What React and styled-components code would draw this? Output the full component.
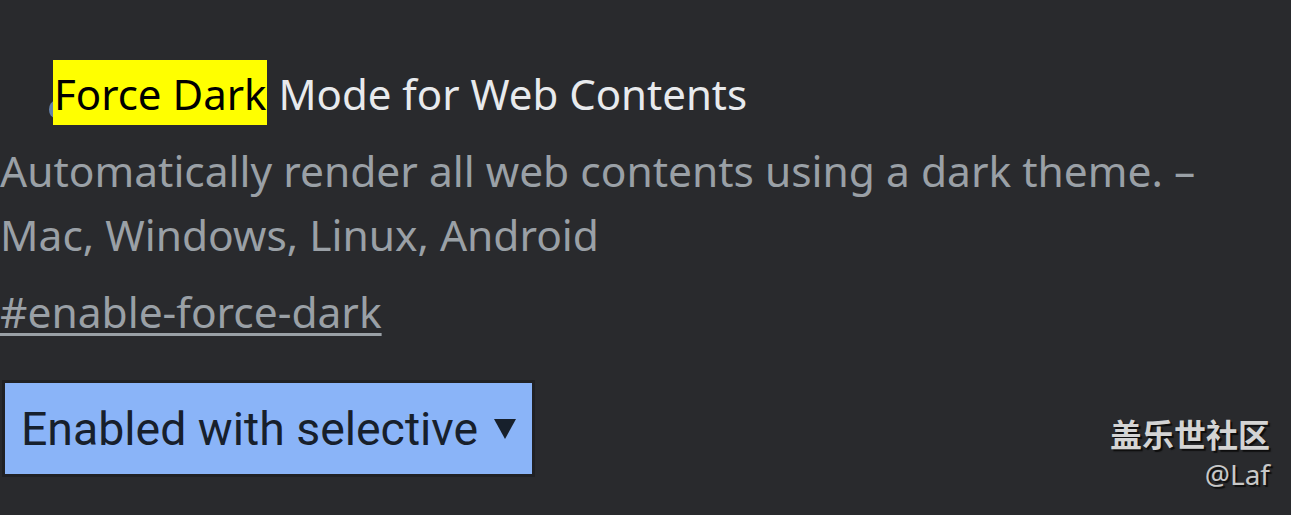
import React from 'react';
import styled, { createGlobalStyle } from 'styled-components';

const GlobalStyle = createGlobalStyle`
	html, body {
		margin: 0;
		padding: 0;
		background: #292a2d;
		height: 100%;
	}
	#root {
		height: 100%;
	}
`;

const Page = styled.div`
	position: relative;
	width: 1291px;
	height: 515px;
	overflow: hidden;
	background: #292a2d;
	font-family: 'Noto Sans', 'Open Sans', sans-serif;
`;

const Experiment = styled.div`
	display: flex;
	flex-direction: column;
	align-items: flex-start;
	padding-top: 61px;
`;

const Title = styled.h3`
	position: relative;
	margin: 0 0 0 53px;
	font-size: 42px;
	font-weight: 400;
	line-height: 65px;
	color: #e8eaed;
`;

const Highlight = styled.mark`
	position: relative;
	padding: 5px 1px 3px;
	background: #ffff00;
	color: #000;
`;

const Dot = styled.span`
	position: absolute;
	left: -4px;
	top: 40px;
	width: 12px;
	height: 17px;
	border-radius: 50%;
	background: #7ea6e0;
	opacity: 0.7;
	clip-path: inset(0 55% 0 0);
`;

const Description = styled.p`
	margin: 13px 0 0;
	font-size: 42.5px;
	line-height: 64px;
	color: #9aa0a6;
`;

const Permalink = styled.a`
	display: block;
	margin-top: 17px;
	font-size: 42.5px;
	line-height: 56px;
	color: #9aa0a6;
	text-decoration: underline;
	text-underline-offset: 5px;
	text-decoration-thickness: 3px;
`;

const Select = styled.div`
	display: flex;
	align-items: center;
	gap: 16px;
	margin: 43px 0 0 5px;
	width: 527px;
	height: 91px;
	padding: 0 17px 0 16px;
	box-sizing: border-box;
	background: #8ab4f8;
	box-shadow: 0 0 0 3px #202124;
	font-family: Roboto, 'Liberation Sans', sans-serif;
	font-size: 46.4px;
	color: #17202c;
	white-space: nowrap;
`;

const Arrow = styled.span`
	margin-left: auto;
	flex-shrink: 0;
	width: 0;
	height: 0;
	border-left: 11px solid transparent;
	border-right: 11px solid transparent;
	border-top: 20px solid #17202c;
`;

const Watermark = styled.div`
	position: absolute;
	top: 414px;
	right: 21px;
	display: flex;
	flex-direction: column;
	align-items: flex-end;
	gap: 4px;
	color: #d4d4d4;
	text-shadow: 2px 2px 1px #0e0e0e;
`;

const Brand = styled.div`
	font-family: 'Noto Sans CJK SC', sans-serif;
	font-weight: 700;
	font-size: 32px;
	line-height: 38px;
`;

const Handle = styled.div`
	font-family: 'Noto Sans', sans-serif;
	font-size: 28px;
	line-height: 36px;
	color: #c8c8c8;
`;

export default function App() {
	return (
		<Page>
			<GlobalStyle />
			<Experiment>
				<Title>
					<Dot />
					<Highlight>Force Dark</Highlight> Mode for Web Contents
				</Title>
				<Description>
					Automatically render all web contents using a dark theme. –<br />
					Mac, Windows, Linux, Android
				</Description>
				<Permalink href="#enable-force-dark">#enable-force-dark</Permalink>
				<Select>
					Enabled with selective
					<Arrow />
				</Select>
			</Experiment>
			<Watermark>
				<Brand>盖乐世社区</Brand>
				<Handle>@Laf</Handle>
			</Watermark>
		</Page>
	);
}
